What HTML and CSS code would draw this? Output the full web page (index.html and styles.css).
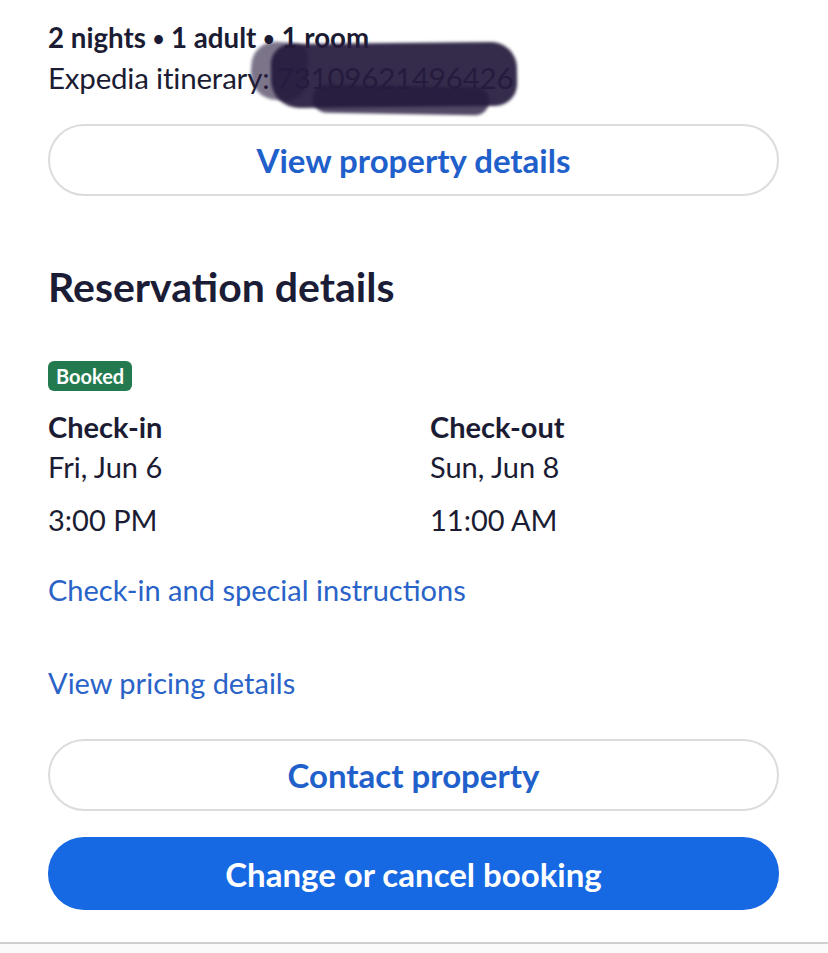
FILE: index.html
```html
<!DOCTYPE html>
<html lang="en">
<head>
<meta charset="utf-8">
<title>Reservation details</title>
<link rel="stylesheet" href="styles.css">
</head>
<body>
<main class="page">
  <section class="summary">
    <p class="stay">2 nights <span class="dot">•</span> 1 adult <span class="dot">•</span> 1 room</p>
    <p class="itin">Expedia itinerary: <span class="itin-num">73109621496426<span class="redact" aria-hidden="true"></span><span class="redact redact-b" aria-hidden="true"></span><span class="redact redact-c" aria-hidden="true"></span></span></p>
  </section>
  <a class="btn btn-outline btn-first" href="#">View property details</a>

  <h2 class="heading">Reservation details</h2>

  <span class="badge">Booked</span>
  <div class="times">
    <div class="col">
      <div class="label">Check-in</div>
      <div class="val">Fri, Jun 6</div>
      <div class="val time">3:00 PM</div>
    </div>
    <div class="col">
      <div class="label">Check-out</div>
      <div class="val">Sun, Jun 8</div>
      <div class="val time">11:00 AM</div>
    </div>
  </div>
  <a class="link link-first" href="#">Check-in and special instructions</a>
  <a class="link link-second" href="#">View pricing details</a>

  <a class="btn btn-outline btn-contact" href="#">Contact property</a>
  <a class="btn btn-primary" href="#">Change or cancel booking</a>
</main>
<div class="footer-rule"></div>
</body>
</html>
```
FILE: styles.css
```css
* { box-sizing: border-box; }
html, body { margin: 0; padding: 0; background: #fff; }
body {
  font-family: "Lato", "Open Sans", sans-serif;
  color: #1b1c33;
  width: 828px;
  height: 953px;
  overflow: hidden;
  position: relative;
}
.page {
  padding: 0 49px 0 48px;
  display: flex;
  flex-direction: column;
  align-items: flex-start;
}
.summary { margin-top: 20px; }
.stay {
  margin: 0;
  font-size: 27.7px;
  font-weight: 700;
  line-height: 36px;
}
.dot { font-size: 20px; vertical-align: 2px; }
.itin {
  margin: 4px 0 0;
  font-size: 29.5px;
  font-weight: 400;
  line-height: 36px;
  letter-spacing: -0.2px;
}
.itin-num { position: relative; color: #2b2440; }
.redact {
  position: absolute;
  left: -6px;
  top: -17px;
  width: 246px;
  height: 64px;
  background: #261b3e;
  border-radius: 20px 26px 22px 28px;
  filter: blur(1.5px);
  opacity: 0.93;
  transform: rotate(-0.6deg);
}
.redact-b {
  left: -26px;
  top: -18px;
  width: 56px;
  height: 58px;
  border-radius: 24px 14px 20px 26px;
  opacity: 0.6;
  transform: rotate(4deg);
}
.redact-c {
  left: 36px;
  top: 26px;
  width: 176px;
  height: 28px;
  border-radius: 14px;
  opacity: 0.8;
  transform: rotate(1deg);
}
.btn {
  display: flex;
  align-items: center;
  justify-content: center;
  align-self: stretch;
  height: 72px;
  border-radius: 36px;
  font-size: 33px;
  font-weight: 700;
  text-decoration: none;
}
.btn-outline {
  border: 2px solid #dcdcdf;
  color: #1f60cb;
  background: #fff;
}
.btn-first { margin-top: 28px; }
.btn-primary {
  background: #1668e3;
  color: #fff;
  margin-top: 26px;
  height: 73px;
}
.heading {
  margin: 66px 0 0;
  font-size: 41px;
  font-weight: 700;
  line-height: 50px;
  color: #1b1c36;
}
.badge {
  margin-top: 49px;
  background: #237a4f;
  color: #fff;
  font-size: 20px;
  font-weight: 700;
  line-height: 30px;
  padding: 0 8px;
  border-radius: 6px;
}
.times {
  align-self: stretch;
  display: grid;
  grid-template-columns: 1fr 1fr;
  column-gap: 33px;
  margin-top: 18px;
}
.label {
  font-size: 29px;
  font-weight: 700;
  line-height: 36px;
}
.val {
  font-size: 29px;
  line-height: 36px;
  margin-top: 4px;
}
.val.time { margin-top: 17px; }
.link {
  color: #2a63c8;
  font-size: 29px;
  line-height: 36px;
  text-decoration: none;
}
.link-first { margin-top: 34px; }
.link-second { margin-top: 57px; }
.btn-contact { margin-top: 38px; }
.footer-rule {
  position: absolute;
  left: 0;
  right: 0;
  top: 942px;
  height: 11px;
  border-top: 2px solid #cfcfd2;
  background: #fafafa;
}
```
